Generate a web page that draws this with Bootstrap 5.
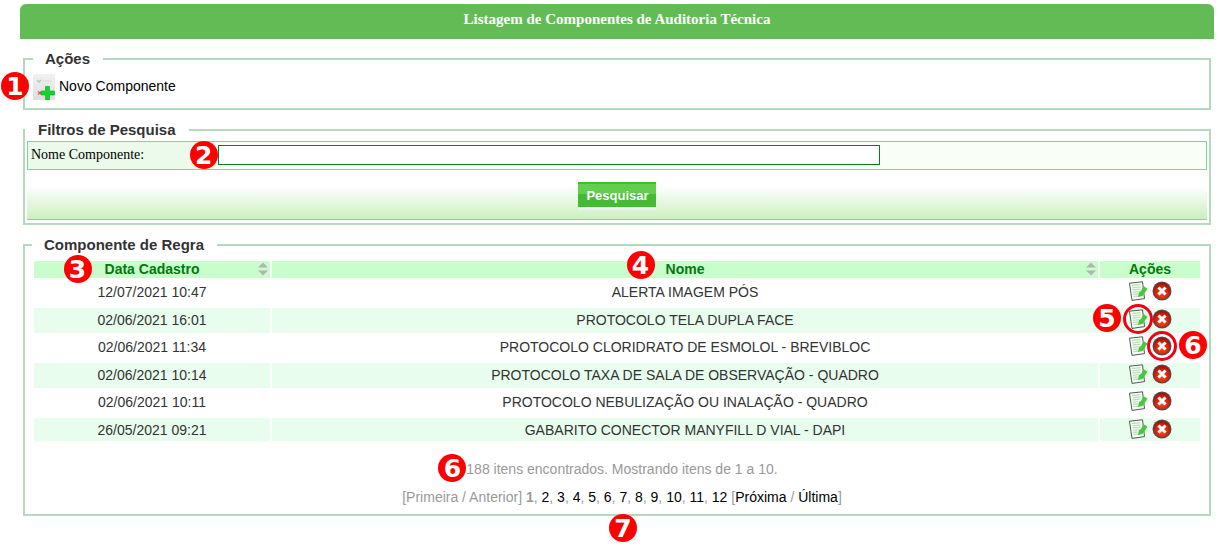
<!DOCTYPE html>
<html lang="pt-BR">
<head>
<meta charset="utf-8">
<meta name="viewport" content="width=device-width, initial-scale=1">
<title>Listagem de Componentes de Auditoria Técnica</title>
<link href="https://cdn.jsdelivr.net/npm/bootstrap@5.3.0/dist/css/bootstrap.min.css" rel="stylesheet">
<style>
  body { font-family: "Liberation Sans", Arial, sans-serif; font-size: 14px; line-height: 18px; color: #333; background: #fff; }
  a { color: #000; text-decoration: none; }
  a:hover { text-decoration: underline; }
  .page { padding: 4px 7px 31px 20px; }
  .title-bar { background: #63bb55; color: #fff; font: bold 15px/18px "Liberation Serif", "Times New Roman", serif; padding: 6px 0 11px; border-radius: 6px 6px 0 0; }
  .panels { padding: 11px 3px 0; gap: 11px; }
  .panel { border: 2px solid #b5d9be; min-width: 0; }
  .panel > legend { float: none; width: auto; margin: 0; padding: 0 13px 0 12px; font-size: 15px; line-height: 18px; font-weight: bold; color: #333; }
  .panel-actions { padding: 6px 8px 8px; }
  .panel-search { padding: 2px 2px 3px; }
  .panel-search > legend { margin-left: -2px; padding-left: 13px; }
  .new-link { gap: 4px; line-height: 24px; }
  .filter-row { border: 1px solid #7fd49b; background: #f9fef7; color: #000; }
  .filter-label { width: 15%; background: #ebfaea; font: 14px/18px "Liberation Serif", "Times New Roman", serif; padding: 4px 3px 5px; }
  .filter-field { padding: 3px 0 4px 13px; }
  .filter-input { width: 67%; height: 20px; border: 1px solid #0a7d1c; background: #fff; padding: 0 4px; }
  .filter-buttons { padding: 12px 0; height: 50px; border-bottom: 1px solid #a3c795; background: linear-gradient(#fff 32%, #e3f6dc 70%, #caf0bf); }
  .search-btn { height: 25px; border: 0; border-radius: 0; padding: 2px 7px 0 8px; font-size: 13px; line-height: 18px; font-weight: bold; color: #fff; background: linear-gradient(#43bb33 2px, #63cd50 2px 12px, #43bb33 12px); box-shadow: 0 3px #eee; }
  .panel-results { padding: 5px 7px 8px; }
  .results { border-collapse: separate; border-spacing: 2px; table-layout: fixed; text-align: center; }
  .results th { background: #c9fdcb; color: #007a0c; height: 17px; padding: 0; line-height: 17px; text-align: center; }
  .results td { height: 26px; padding: 3px 0 0; vertical-align: top; line-height: 18px; }
  .results tr:nth-child(even) td { height: 25px; background: #e8fdee; }
  .results tr:last-child td { height: 23px; }
  .col-date { width: 236px; }
  .col-acts { width: 100px; }
  .sort { right: 2px; top: 1px; }
  .icon-btn { border: 0; background: none; padding: 0; width: 20px; height: 20px; line-height: 0; }
  .row-icons { gap: 4px; height: 20px; }
  .results .acts { padding-top: 1px; }
  .summary { color: #999; padding: 17px 0 0 10px; }
  .pager { color: #999; padding: 10px 0 0 10px; }
  .marker { position: absolute; width: 28px; height: 28px; border-radius: 50%; background: #f00; color: #fff; font: bold 25px/29px "DejaVu Sans", sans-serif; text-align: center; z-index: 2; }
  .ring { position: absolute; inset: -5px; border: 3px solid #f00016; border-radius: 50%; z-index: 1; }
  .m-left { left: -32px; top: -2px; }
  .m-input { left: -15px; top: -1px; }
  .m-date { left: -41px; top: -6px; }
  .m-name { left: -39px; top: -10px; }
  .m-edit { right: 27px; top: -5px; }
  .m-del { left: 27px; top: -5px; }
  .m-sum { right: 100%; top: -7px; }
  .m-end { left: 50%; margin-left: -8px; top: 100%; }
</style>
</head>
<body>
<svg class="position-absolute" width="0" height="0" aria-hidden="true">
  <defs>
    <radialGradient id="red" cx="50%" cy="65%" r="60%"><stop offset="0" stop-color="#ff4a20"/><stop offset=".55" stop-color="#d92a10"/><stop offset="1" stop-color="#a51208"/></radialGradient>
    <linearGradient id="sheet" x2="0" y2="1"><stop offset="0" stop-color="#f1f1f1"/><stop offset="1" stop-color="#dedede"/></linearGradient>
  </defs>
  <symbol id="edit" viewBox="0 0 20 20">
    <path d="M1.500 2.200 14.500.8 16.500 17.600 4 19.400Z" fill="#fff" stroke="#2f4a35" stroke-width=".9"/>
    <path d="M4 4.500 12.500 3.600M4.300 6.800l8.500-.9M4.500 9l8-.9M4.800 11.300l6-.7M5 13.500l5.500-.6M5.300 15.700l6-.7" stroke="#b9dfb5" stroke-width="1.300"/>
    <path d="m15.500 5 4 2.700-5 7.300-4.500 1 1-5 2-1Z" fill="#45c83c"/>
  </symbol>
  <symbol id="remove" viewBox="0 0 20 20">
    <circle cx="10" cy="10" r="9.500" fill="#5b4a46"/>
    <circle cx="10" cy="10" r="8.300" fill="url(#red)"/>
    <path d="m7.500 7.500 5 5M12.500 7.500l-5 5" stroke="#fff" stroke-width="3" stroke-linecap="square"/>
  </symbol>
  <symbol id="sorter" viewBox="0 0 10 14">
    <path d="M0 5.500 5 .5l5 5ZM0 8.500h10l-5 5Z" fill="#b3b3b3"/>
  </symbol>
</svg>
<main class="page">
  <h1 class="title-bar text-center mb-0">Listagem de Componentes de Auditoria Técnica</h1>
  <div class="panels d-flex flex-column">

    <fieldset class="panel panel-actions">
      <legend>Ações</legend>
      <a href="#" class="new-link d-inline-flex position-relative align-top">
        <span class="marker m-left">1</span>
        <svg width="22" height="26" viewBox="0 0 22 26" aria-hidden="true">
          <rect width="22" height="26" rx="1" fill="url(#sheet)"/>
          <path d="m4 6 2 2 2-2" stroke="#9fd8a4" stroke-width="1.500" fill="none"/>
          <path d="M10 7h9" stroke="#dcdcdc"/>
          <path d="M5 17.500 9 20.500M5 20.500 9 17.500" stroke="#f05050" stroke-width="1.500"/>
          <path d="M12.500 12.500h4v4.500h5v4h-5v5h-4v-5h-4.500v-4h4.500Z" fill="#12d52c" stroke="#0eaa22" stroke-width=".6"/>
        </svg>
        <span>Novo Componente</span>
      </a>
    </fieldset>

    <fieldset class="panel panel-search">
      <legend>Filtros de Pesquisa</legend>
      <form>
        <div class="filter-row d-flex">
          <label class="filter-label" for="nome">Nome Componente:</label>
          <div class="filter-field flex-grow-1 position-relative">
            <span class="marker m-input">2</span>
            <input type="text" id="nome" class="filter-input d-block">
          </div>
        </div>
        <div class="filter-buttons d-flex justify-content-center">
          <button type="button" class="search-btn">Pesquisar</button>
        </div>
      </form>
    </fieldset>

    <fieldset class="panel panel-results position-relative">
      <legend>Componente de Regra</legend>
      <table class="results w-100">
        <colgroup><col class="col-date"><col><col class="col-acts"></colgroup>
        <thead>
          <tr>
            <th class="position-relative"><span class="position-relative"><span class="marker m-date">3</span>Data Cadastro</span><svg class="sort position-absolute" width="10" height="14"><use href="#sorter"/></svg></th>
            <th class="position-relative"><span class="position-relative"><span class="marker m-name">4</span>Nome</span><svg class="sort position-absolute" width="10" height="14"><use href="#sorter"/></svg></th>
            <th>Ações</th>
          </tr>
        </thead>
        <tbody id="rows"></tbody>
      </table>
      <div class="summary text-center"><span class="position-relative"><span class="marker m-sum">6</span>188 itens encontrados. Mostrando itens de 1 a 10.</span></div>
      <nav class="pager text-center" aria-label="Paginação">[Primeira / Anterior] <strong>1</strong>, <a href="#">2</a>, <a href="#">3</a>, <a href="#">4</a>, <a href="#">5</a>, <a href="#">6</a>, <a href="#">7</a>, <a href="#">8</a>, <a href="#">9</a>, <a href="#">10</a>, <a href="#">11</a>, <a href="#">12</a> [<a href="#">Próxima</a> / <a href="#">Última</a>]</nav>
      <span class="marker m-end">7</span>
    </fieldset>
  </div>
</main>
<script>
  const items = [
    ["12/07/2021 10:47", "ALERTA IMAGEM PÓS"],
    ["02/06/2021 16:01", "PROTOCOLO TELA DUPLA FACE", "edit"],
    ["02/06/2021 11:34", "PROTOCOLO CLORIDRATO DE ESMOLOL - BREVIBLOC", "remove"],
    ["02/06/2021 10:14", "PROTOCOLO TAXA DE SALA DE OBSERVAÇÃO - QUADRO"],
    ["02/06/2021 10:11", "PROTOCOLO NEBULIZAÇÃO OU INALAÇÃO - QUADRO"],
    ["26/05/2021 09:21", "GABARITO CONECTOR MANYFILL D VIAL - DAPI"]
  ];
  const marks = {
    edit: '<span class="ring"></span><span class="marker m-edit">5</span>',
    remove: '<span class="ring"></span><span class="marker m-del">6</span>'
  };
  const button = (icon, label, mark) =>
    `<button type="button" class="icon-btn position-relative" aria-label="${label}"><svg width="20" height="20"><use href="#${icon}"/></svg>${mark === icon ? marks[icon] : ""}</button>`;
  document.getElementById("rows").innerHTML = items.map(([date, name, mark]) =>
    `<tr><td>${date}</td><td>${name}</td><td class="acts"><div class="row-icons d-flex justify-content-center">${button("edit", "Editar", mark)}${button("remove", "Excluir", mark)}</div></td></tr>`).join("");
</script>
<script src="https://cdn.jsdelivr.net/npm/bootstrap@5.3.0/dist/js/bootstrap.bundle.min.js"></script>
</body>
</html>
